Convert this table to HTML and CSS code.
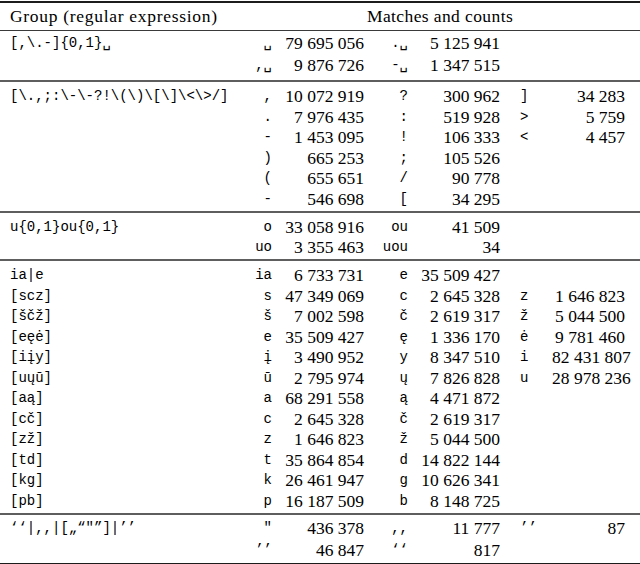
FILE: index.html
```html
<!DOCTYPE html>
<html>
<head>
<meta charset="utf-8">
<link rel="stylesheet" href="styles.css">
</head>
<body>
<table class="tbl">
<colgroup>
<col class="c-rx"><col class="c-k"><col class="c-n"><col class="c-k2"><col class="c-n"><col class="c-k3"><col class="c-n3">
</colgroup>
<thead>
<tr><th class="th-grp">Group (regular expression)</th><th class="th-mc" colspan="6">Matches and counts</th></tr>
</thead>
<tbody class="grp g1">
<tr><td class="rx">[,\.-]{0,1}␣</td><td class="k">␣</td><td class="n">79 695 056</td><td class="k">.␣</td><td class="n">5 125 941</td><td class="k3"></td><td class="n n3"></td></tr>
<tr><td class="rx"></td><td class="k">,␣</td><td class="n">9 876 726</td><td class="k">-␣</td><td class="n">1 347 515</td><td class="k3"></td><td class="n n3"></td></tr>
</tbody>
<tbody class="grp">
<tr><td class="rx">[\.,;:\-\-?!\(\)\[\]\&lt;\&gt;/]</td><td class="k">,</td><td class="n">10 072 919</td><td class="k">?</td><td class="n">300 962</td><td class="k3">]</td><td class="n n3">34 283</td></tr>
<tr><td class="rx"></td><td class="k">.</td><td class="n">7 976 435</td><td class="k">:</td><td class="n">519 928</td><td class="k3">&gt;</td><td class="n n3">5 759</td></tr>
<tr><td class="rx"></td><td class="k">-</td><td class="n">1 453 095</td><td class="k">!</td><td class="n">106 333</td><td class="k3">&lt;</td><td class="n n3">4 457</td></tr>
<tr><td class="rx"></td><td class="k">)</td><td class="n">665 253</td><td class="k">;</td><td class="n">105 526</td><td class="k3"></td><td class="n n3"></td></tr>
<tr><td class="rx"></td><td class="k">(</td><td class="n">655 651</td><td class="k">/</td><td class="n">90 778</td><td class="k3"></td><td class="n n3"></td></tr>
<tr><td class="rx"></td><td class="k">-</td><td class="n">546 698</td><td class="k">[</td><td class="n">34 295</td><td class="k3"></td><td class="n n3"></td></tr>
</tbody>
<tbody class="grp">
<tr><td class="rx">u{0,1}ou{0,1}</td><td class="k">o</td><td class="n">33 058 916</td><td class="k">ou</td><td class="n">41 509</td><td class="k3"></td><td class="n n3"></td></tr>
<tr><td class="rx"></td><td class="k">uo</td><td class="n">3 355 463</td><td class="k">uou</td><td class="n">34</td><td class="k3"></td><td class="n n3"></td></tr>
</tbody>
<tbody class="grp">
<tr><td class="rx">ia|e</td><td class="k">ia</td><td class="n">6 733 731</td><td class="k">e</td><td class="n">35 509 427</td><td class="k3"></td><td class="n n3"></td></tr>
<tr><td class="rx">[scz]</td><td class="k">s</td><td class="n">47 349 069</td><td class="k">c</td><td class="n">2 645 328</td><td class="k3">z</td><td class="n n3">1 646 823</td></tr>
<tr><td class="rx">[ščž]</td><td class="k">š</td><td class="n">7 002 598</td><td class="k">č</td><td class="n">2 619 317</td><td class="k3">ž</td><td class="n n3">5 044 500</td></tr>
<tr><td class="rx">[eęė]</td><td class="k">e</td><td class="n">35 509 427</td><td class="k">ę</td><td class="n">1 336 170</td><td class="k3">ė</td><td class="n n3">9 781 460</td></tr>
<tr><td class="rx">[iįy]</td><td class="k">į</td><td class="n">3 490 952</td><td class="k">y</td><td class="n">8 347 510</td><td class="k3">i</td><td class="n n3">82 431 807</td></tr>
<tr><td class="rx">[uųū]</td><td class="k">ū</td><td class="n">2 795 974</td><td class="k">ų</td><td class="n">7 826 828</td><td class="k3">u</td><td class="n n3">28 978 236</td></tr>
<tr><td class="rx">[aą]</td><td class="k">a</td><td class="n">68 291 558</td><td class="k">ą</td><td class="n">4 471 872</td><td class="k3"></td><td class="n n3"></td></tr>
<tr><td class="rx">[cč]</td><td class="k">c</td><td class="n">2 645 328</td><td class="k">č</td><td class="n">2 619 317</td><td class="k3"></td><td class="n n3"></td></tr>
<tr><td class="rx">[zž]</td><td class="k">z</td><td class="n">1 646 823</td><td class="k">ž</td><td class="n">5 044 500</td><td class="k3"></td><td class="n n3"></td></tr>
<tr><td class="rx">[td]</td><td class="k">t</td><td class="n">35 864 854</td><td class="k">d</td><td class="n">14 822 144</td><td class="k3"></td><td class="n n3"></td></tr>
<tr><td class="rx">[kg]</td><td class="k">k</td><td class="n">26 461 947</td><td class="k">g</td><td class="n">10 626 341</td><td class="k3"></td><td class="n n3"></td></tr>
<tr><td class="rx">[pb]</td><td class="k">p</td><td class="n">16 187 509</td><td class="k">b</td><td class="n">8 148 725</td><td class="k3"></td><td class="n n3"></td></tr>
</tbody>
<tbody class="grp g5">
<tr><td class="rx">‘‘|,,|[„“"”]|’’</td><td class="k">"</td><td class="n">436 378</td><td class="k">,,</td><td class="n">11 777</td><td class="k3">’’</td><td class="n n3">87</td></tr>
<tr><td class="rx"></td><td class="k">’’</td><td class="n">46 847</td><td class="k">‘‘</td><td class="n">817</td><td class="k3"></td><td class="n n3"></td></tr>
</tbody>
</table>
</body>
</html>
```
FILE: styles.css
```css
html, body {
  margin: 0;
  background: #ffffff;
  color: #000000;
}

body {
  padding-top: 1px;
  font-family: "Liberation Serif", "DejaVu Serif", "Times New Roman", Times, serif;
}

.tbl {
  width: 640px;
  table-layout: fixed;
  border-collapse: separate;
  border-spacing: 0;
  font-family: "Liberation Serif", "DejaVu Serif", "Times New Roman", Times, serif;
  font-size: 17.5px;
}

.c-rx { width: 240px; }
.c-k { width: 32px; }
.c-n { width: 92px; }
.c-k2 { width: 44px; }
.c-k3 { width: 52px; }
.c-n3 { width: 88px; }

.tbl th {
  font-family: "Liberation Serif", "DejaVu Serif", "Times New Roman", Times, serif;
  font-weight: normal;
  line-height: 27px;
  padding: 0;
  border-top: 2px solid #1c1c1c;
  border-bottom: 1px solid #3a3a3a;
}

.tbl th.th-grp {
  text-align: left;
  padding-left: 10px;
  letter-spacing: 0.7px;
}

.tbl th.th-mc {
  text-align: center;
  letter-spacing: 0.4px;
}

.tbl td {
  padding: 0;
  line-height: 20.5px;
  white-space: nowrap;
}

.tbl td.n {
  font-family: "Liberation Serif", "DejaVu Serif", "Times New Roman", Times, serif;
  text-align: right;
}

.tbl td.rx, .tbl td.k, .tbl td.k3 {
  font-family: "Liberation Mono", "DejaVu Sans Mono", monospace;
  font-size: 14px;
}

.tbl td.rx {
  padding-left: 10px;
  text-align: left;
}

.tbl td.k {
  text-align: right;
}

.tbl td.k3 {
  padding-left: 20px;
  text-align: left;
}

.tbl td.n3 {
  padding-right: 15px;
}

.grp tr:first-child td {
  padding-top: 4px;
}

.grp tr:last-child td {
  padding-bottom: 1.5px;
}

.grp + .grp tr:first-child td {
  border-top: 2px solid #5e5e5e;
}

.g1 td {
  line-height: 21.5px;
}

.g1 tr:first-child td {
  padding-top: 2px;
}

.g1 tr:last-child td {
  padding-bottom: 4px;
}

.g5 td {
  line-height: 22px;
}

.g5 tr:first-child td {
  padding-top: 2px;
}

.g5 tr:last-child td {
  padding-bottom: 2px;
  border-bottom: 2px solid #1c1c1c;
}
```
